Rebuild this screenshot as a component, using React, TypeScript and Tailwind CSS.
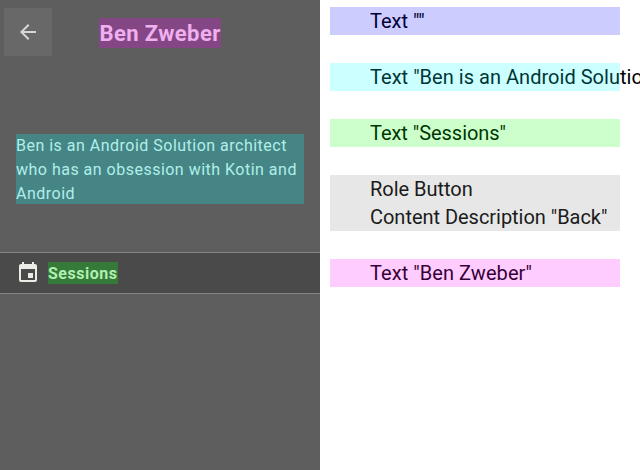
import React from "react";

const rows = [
  { tint: "bg-[#0000ff]/20", tracking: "tracking-normal", lines: ['Text ""'] },
  { tint: "bg-[#00ffff]/20", tracking: "tracking-[0.03px]", lines: ['Text "Ben is an Android Solution architect'] },
  { tint: "bg-[#00ff00]/20", tracking: "tracking-[-0.04px]", lines: ['Text "Sessions"'] },
  { tint: "bg-[#888888]/20", tracking: "tracking-[-0.03px]", lines: ["Role Button", 'Content Description "Back"'] },
  { tint: "bg-[#ff00ff]/20", tracking: "tracking-[0.06px]", lines: ['Text "Ben Zweber"'] },
];

export default function App() {
  return (
    <div className="flex h-[470px] w-[640px] overflow-hidden bg-white font-['Roboto',sans-serif]">
      <div className="flex w-[320px] shrink-0 flex-col bg-[#5e5e5e]">
        <header className="flex h-16 items-center">
          <div className="ml-1 grid size-12 place-items-center bg-[#686868]">
            <svg viewBox="0 0 24 24" className="size-6" fill="#d8d8d4">
              <path d="M20 11H7.83l5.59-5.59L12 4l-8 8 8 8 1.41-1.41L7.83 13H20v-2z" />
            </svg>
          </div>
          <h1 className="ml-[47px] mt-px h-[30px] w-[122px] whitespace-nowrap bg-[#854685] pl-[0.5px] text-[22px] font-bold leading-[32px] tracking-[0.4px] text-[#efb0ef]">Ben Zweber</h1>
        </header>
        <p className="mx-4 mt-[70px] h-[70px] whitespace-nowrap bg-[#468585] text-base leading-6 tracking-[0.49px] text-[#b0efe9]">
          Ben is an Android Solution architect<br />who has an obsession with Kotin and<br />Android
        </p>
        <div className="mt-12 flex h-[42px] items-center border-y border-[#858585] bg-[#4a4a4a] pl-4">
          <svg viewBox="0 0 24 24" className="size-6" fill="#ecece6">
            <path d="M17 12h-5v5h5v-5zM16 1v2H8V1H6v2H5c-1.11 0-1.99.9-1.99 2L3 19c0 1.1.89 2 2 2h14c1.1 0 2-.9 2-2V5c0-1.1-.9-2-2-2h-1V1h-2zm3 18H5V8h14v11z" />
          </svg>
          <span className="ml-2 h-[22px] w-[70px] whitespace-nowrap bg-[#357a38] text-base font-bold leading-[23px] tracking-[0.5px] text-[#b0efb0]">Sessions</span>
        </div>
      </div>
      <div className="ml-[10px] mt-[7px] flex w-[290px] shrink-0 flex-col gap-7">
        {rows.map((row) => (
          <div key={row.lines[0]} className={`relative ${row.tracking} whitespace-nowrap pl-10 text-xl leading-7 text-black`}>
            {row.lines.map((line) => (
              <div key={line}>{line}</div>
            ))}
            <div className={`absolute inset-0 ${row.tint}`} />
          </div>
        ))}
      </div>
    </div>
  );
}
